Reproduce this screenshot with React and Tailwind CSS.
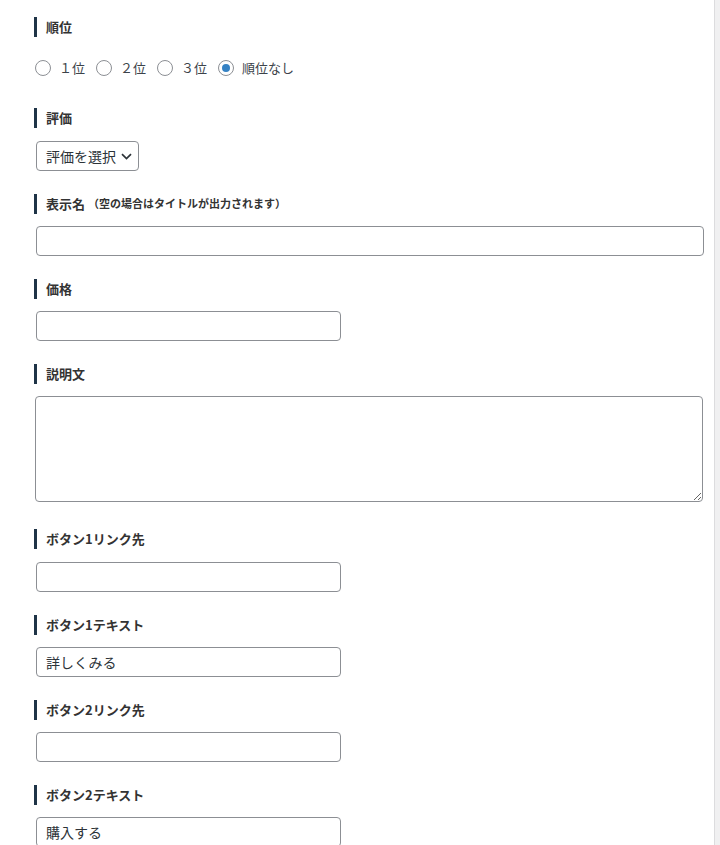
const font = { fontFamily: '"Noto Sans CJK JP", "Noto Sans", sans-serif' };

function Label({ children, sub, className = '' }) {
  return (
    <div className={`flex items-center h-5 border-l-[3px] border-[#1f3447] pl-[9px] ${className}`}>
      <span className="text-[13px] font-bold text-[#333] leading-none pb-[2px]">{children}</span>
      {sub && <span className="text-[11px] font-bold text-[#333] leading-none ml-[3px] pb-[2px]">{sub}</span>}
    </div>
  );
}

function Radio({ label, checked }) {
  return (
    <label className="flex items-center mr-[11px]">
      <span className="w-4 h-4 rounded-full border border-[#8c8f94] bg-white flex items-center justify-center">
        {checked && <span className="w-2 h-2 rounded-full bg-[#3582c4]" />}
      </span>
      <span className="ml-[8px] text-[13px] text-[#3c434a] leading-none pb-[1px]">{label}</span>
    </label>
  );
}

function Input({ value = '', wide }) {
  return (
    <input
      readOnly
      value={value}
      className={`block ml-[2px] h-[30px] ${wide ? 'w-[668px]' : 'w-[305px]'} border border-[#8c8f94] rounded-[4px] px-[9px] text-[14px] text-[#2c3338] bg-white outline-none`}
      style={font}
    />
  );
}

export default function App() {
  return (
    <div className="flex min-h-[845px] bg-white" style={font}>
      <div className="w-[714px] pl-[34px] pt-[17px] pb-10">
        <Label>順位</Label>
        <div className="flex items-center h-5 mt-[21px] ml-[1px]">
          <Radio label="１位" />
          <Radio label="２位" />
          <Radio label="３位" />
          <Radio label="順位なし" checked />
        </div>

        <Label className="mt-[30px]">評価</Label>
        <div className="mt-[13px] ml-[2px] inline-flex items-center h-[30px] border border-[#8c8f94] rounded-[4px] pl-[9px] pr-[6px] bg-white">
          <span className="text-[14px] text-[#2c3338] leading-none pb-[1px]">評価を選択</span>
          <svg className="ml-[5px]" width="11" height="7" viewBox="0 0 11 7" fill="none">
            <path d="M1 1.2 L5.5 5.5 L10 1.2" stroke="#2c3338" strokeWidth="1.7" />
          </svg>
        </div>

        <Label className="mt-[23px]" sub="（空の場合はタイトルが出力されます）">表示名</Label>
        <div className="mt-[12px]"><Input wide /></div>

        <Label className="mt-[23px]">価格</Label>
        <div className="mt-[12px]"><Input /></div>

        <Label className="mt-[23px]">説明文</Label>
        <textarea
          readOnly
          className="block mt-[12px] ml-[1px] w-[668px] h-[106px] border border-[#8c8f94] rounded-[4px] px-[9px] py-1 text-[14px] bg-white outline-none"
          style={font}
        />

        <Label className="mt-[27px]">ボタン1リンク先</Label>
        <div className="mt-[13px]"><Input /></div>

        <Label className="mt-[23px]">ボタン1テキスト</Label>
        <div className="mt-[12px]"><Input value="詳しくみる" /></div>

        <Label className="mt-[23px]">ボタン2リンク先</Label>
        <div className="mt-[12px]"><Input /></div>

        <Label className="mt-[23px]">ボタン2テキスト</Label>
        <div className="mt-[12px]"><Input value="購入する" /></div>
      </div>
      <div className="flex-1 border-l border-[#dcdcde] bg-[#f0f0f1]" />
    </div>
  );
}
